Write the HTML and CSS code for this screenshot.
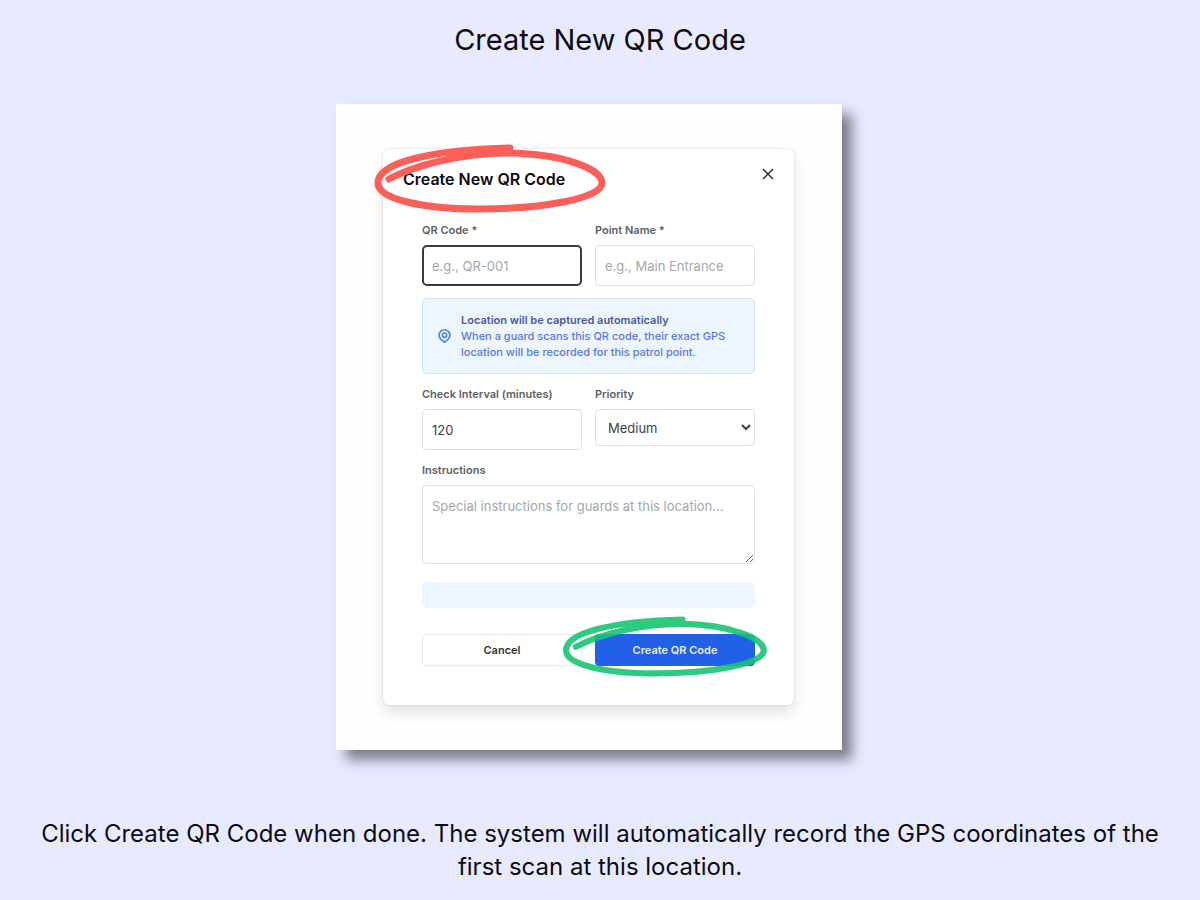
FILE: index.html
```html
<!DOCTYPE html>
<html lang="en">
<head>
    <meta charset="UTF-8">
    <meta name="viewport" content="width=device-width, initial-scale=1.0">
    <title>Create New QR Code</title>
    <link rel="stylesheet" href="styles.css">
</head>
<body>
    <main class="slide">
        <h1 class="slide-title">Create New QR Code</h1>

        <div class="frame">
            <section class="modal">
                <header class="modal-header">
                    <h2 class="modal-title marked">
                        Create New QR Code
                        <svg class="marker marker-red" viewBox="0 0 231 68" aria-hidden="true">
                            <path d="M15 35 C40 22 85 9 135 9 C190 10 228 25 228 39 C228 55 165 65 105 65 C48 65 4 55 4 39 C4 19 55 6 136 4"/>
                        </svg>
                    </h2>
                    <button type="button" class="close" aria-label="Close">
                        <svg viewBox="0 0 12 12"><path d="M1 1 L11 11 M11 1 L1 11"/></svg>
                    </button>
                </header>

                <form class="form">
                    <div class="row">
                        <div class="field">
                            <label for="qrCode">QR Code *</label>
                            <input type="text" id="qrCode" class="control active" placeholder="e.g., QR-001">
                        </div>
                        <div class="field">
                            <label for="pointName">Point Name *</label>
                            <input type="text" id="pointName" class="control" placeholder="e.g., Main Entrance">
                        </div>
                    </div>

                    <div class="notice">
                        <svg class="pin" viewBox="0 0 24 26" aria-hidden="true">
                            <path d="M22 11.5 C22 17 16 22 12 24.5 C8 22 2 17 2 11.5 A10 10 0 0 1 22 11.5 Z"/>
                            <circle cx="12" cy="11.5" r="4"/>
                        </svg>
                        <div class="notice-text">
                            <strong>Location will be captured automatically</strong>
                            <p>When a guard scans this QR code, their exact GPS location will be recorded for this patrol point.</p>
                        </div>
                    </div>

                    <div class="row">
                        <div class="field">
                            <label for="interval">Check Interval (minutes)</label>
                            <input type="text" inputmode="numeric" id="interval" class="control" value="120">
                        </div>
                        <div class="field">
                            <label for="priority">Priority</label>
                            <select id="priority" class="control select">
                                <option>Low</option>
                                <option selected>Medium</option>
                                <option>High</option>
                            </select>
                        </div>
                    </div>

                    <div class="field">
                        <label for="instructions">Instructions</label>
                        <textarea id="instructions" class="control textarea" placeholder="Special instructions for guards at this location..."></textarea>
                    </div>

                    <div class="strip"></div>

                    <div class="row actions">
                        <button type="button" class="btn cancel">Cancel</button>
                        <button type="button" class="btn create marked">
                            Create QR Code
                            <svg class="marker marker-green" viewBox="0 0 231 68" aria-hidden="true">
                                <path d="M15 35 C40 22 85 9 135 9 C190 10 228 25 228 39 C228 55 165 65 105 65 C48 65 4 55 4 39 C4 19 55 6 136 4"/>
                            </svg>
                        </button>
                    </div>
                </form>
            </section>
        </div>

        <p class="caption">Click Create QR Code when done. The system will automatically record the GPS coordinates of the first scan at this location.</p>
    </main>
</body>
</html>
```
FILE: styles.css
```css
* {
    box-sizing: border-box;
}

body {
    margin: 0;
    font-family: Inter, "Liberation Sans", sans-serif;
    background-color: #e8ebff;
    color: #0b0b12;
}

.slide {
    display: flex;
    flex-direction: column;
    align-items: center;
    padding: 20px 32px 16px;
}

.slide-title {
    margin: 0 0 44px;
    font-size: 29px;
    font-weight: 400;
    line-height: 40px;
}

.caption {
    margin: 67px 0 0;
    font-size: 24px;
    line-height: 33px;
    text-align: center;
}

/* screenshot frame */
.frame {
    width: 100%;
    max-width: 506px;
    margin-right: 22px;
    padding: 45px 48px 45px 47px;
    background: #fefefe;
    box-shadow: 10px 10px 12px #7b7e8a;
}

.modal {
    padding: 16px 20px 39px;
    background: #fff;
    border-radius: 6px;
    box-shadow: 0 0 2px rgba(0, 0, 0, 0.18), 0 8px 14px rgba(0, 0, 0, 0.1);
}

.modal-header {
    display: flex;
    justify-content: space-between;
    align-items: flex-start;
    margin-bottom: 31px;
}

.modal-title {
    margin: 2px 0 0;
    font-size: 16px;
    font-weight: 600;
    line-height: 24px;
}

.close {
    display: flex;
    padding: 3px 0;
    border: none;
    background: none;
    cursor: pointer;
}

.close svg {
    width: 12px;
    height: 12px;
    fill: none;
    stroke: #333;
    stroke-width: 1.5;
}

/* form */
.form {
    display: flex;
    flex-direction: column;
    gap: 12px;
    padding: 0 19px;
}

.row {
    display: flex;
    align-items: flex-start;
    gap: 13px;
}

.field {
    display: flex;
    flex: 1;
    flex-direction: column;
    gap: 7px;
    min-width: 0;
}

label {
    font-size: 11px;
    font-weight: 600;
    line-height: 16px;
    color: #5c5f66;
}

.control {
    width: 100%;
    height: 41px;
    padding: 0 9px;
    border: 1px solid #dfe1e4;
    border-radius: 4px;
    background: #fff;
    font-family: inherit;
    font-size: 13px;
    color: #3c3f44;
}

.control::placeholder {
    color: #a3a7ae;
}

.control.active {
    padding: 0 8px;
    border: 2px solid #3b3b3f;
    border-radius: 5px;
}

.select {
    height: 37px;
    padding: 0 0 0 8px;
}

.textarea {
    display: block;
    height: 79px;
    padding: 12px 9px;
    resize: vertical;
}

.notice {
    display: flex;
    align-items: center;
    gap: 10px;
    padding: 13px 15px;
    border: 1px solid #cfe3fb;
    border-radius: 5px;
    background: #edf5ff;
    font-size: 11px;
    line-height: 16px;
}

.notice strong {
    font-weight: 600;
    color: #4b59a5;
}

.notice p {
    margin: 0;
    font-weight: 500;
    color: #5b78ea;
}

.pin {
    flex: none;
    width: 13px;
    height: 14px;
    fill: none;
    stroke: #4285f0;
    stroke-width: 3;
}

.strip {
    height: 26px;
    margin-top: 6px;
    border-radius: 5px;
    background: #edf5ff;
}

.actions {
    margin-top: 14px;
}

.btn {
    flex: 1;
    height: 32px;
    padding: 0;
    border: 1px solid #eaebed;
    border-radius: 4px;
    background: #fff;
    font-family: inherit;
    font-size: 11px;
    font-weight: 600;
    color: #333;
    cursor: pointer;
}

.create {
    border-color: #2360e8;
    background: #2360e8;
    color: #e4ecff;
}

/* hand drawn rings */
.marked {
    position: relative;
}

.marker {
    position: absolute;
    overflow: visible;
    fill: none;
    stroke-width: 7;
    stroke-linecap: round;
    pointer-events: none;
}

.marker-red {
    top: -23px;
    left: -29px;
    width: 231px;
    height: 68px;
    stroke: #fa5f5a;
}

.marker-green {
    top: -19px;
    left: -34px;
    width: 205px;
    height: 60px;
    stroke: #17c573;
    opacity: 0.9;
}
```
